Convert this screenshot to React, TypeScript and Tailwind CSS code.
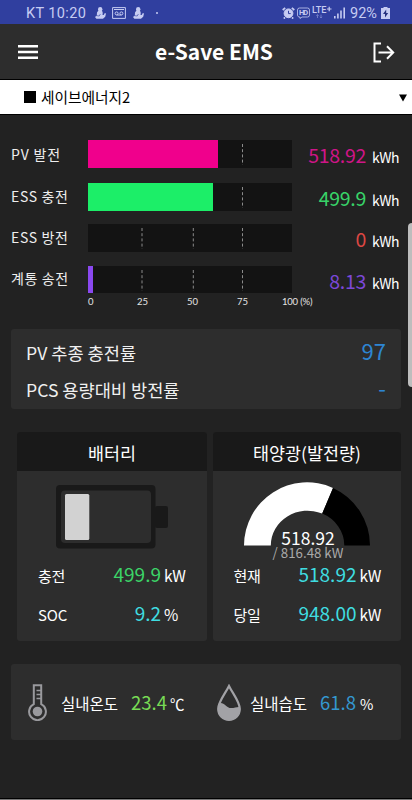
import type { ReactNode } from "react";

const meters = [
  { label: "PV 발전", value: "518.92", width: 129.5, bar: "bg-[#f0008c]", text: "text-[#cf1587]", pad: "mb-[15px]", barH: "h-[28px]", labelCls: "mb-px tracking-[0.8px]" },
  { label: "ESS 충전", value: "499.9", width: 125, bar: "bg-[#1cee68]", text: "text-[#38d368]", pad: "mb-[13px]", barH: "h-[28px]", labelCls: "mb-[3px] tracking-[0.65px]" },
  { label: "ESS 방전", value: "0", width: 0, bar: "bg-[#e04848]", text: "text-[#dc4743]", pad: "mb-[14px]", barH: "h-[28px]", labelCls: "mb-[3px] tracking-[0.65px]" },
  { label: "계통 송전", value: "8.13", width: 5, bar: "bg-[#8a48f0]", text: "text-[#7c48d8]", pad: "", barH: "h-[27px]", labelCls: "mb-[3px] tracking-[0.6px]" },
];

function PersonIcon() {
  return (
    <svg width="11" height="12" viewBox="0 0 11 12" fill="#c6ccf2">
      <circle cx="5.2" cy="2.3" r="2.2" />
      <path d="M3.4 3.5h3.6L7.8 6l-.4 1.8 1.4.2 1-2 1.2.6-.8 3.2L8 11.800H1.400L0 10l1.800-1.600L2 5.600z" />
      <path d="M1.200 8.600l3 .4L5.400 7" stroke="#303f9f" strokeWidth=".6" fill="none" />
    </svg>
  );
}

function StatusBar() {
  return (
    <div className="flex h-6 items-center bg-[#303f9f] pl-[26px] font-[Roboto,sans-serif] text-[14px] text-[#c6ccf2]">
      <span className="w-[61px] pt-[3px] text-[14.5px] leading-5 tracking-[0.4px] whitespace-nowrap">KT 10:20</span>
      <div className="flex items-center pt-px pl-[8px]">
        <PersonIcon />
        <svg className="ml-[6px]" width="14" height="12" viewBox="0 0 14 12" fill="none" stroke="#c6ccf2">
          <path d="M.6.6h12.8v10.8H.6zM2 2.5h10" />
          <circle cx="4.6" cy="6.4" r="1.5" />
          <circle cx="9.4" cy="6.4" r="1.5" />
          <path d="M4.6 8h4.8" />
        </svg>
        <span className="ml-[7px]"><PersonIcon /></span>
        <span className="ml-[12px] size-[2px] rounded-full bg-[#c6ccf2]" />
      </div>
      <div className="ml-auto flex items-center pt-[2px] pr-[22px]">
        <svg width="13" height="12" viewBox="0 0 13 12" fill="none" stroke="#c6ccf2">
          <circle cx="6.5" cy="6.3" r="4.4" fill="#c6ccf2" />
          <path d="M.7 3 3.2.8M12.3 3 9.8.8M3 10.3 1.8 11.6M10 10.3l1.2 1.3" strokeWidth="1.7" />
          <path d="M6.5 3.8v2.8h2.2" stroke="#303f9f" />
        </svg>
        <svg className="ml-[2px]" width="13" height="12" viewBox="0 0 13 12">
          <path d="M2.5 1h8a2 2 0 0 1 2 2v5a2 2 0 0 1-2 2H5l-2 1.5V10a2 2 0 0 1-2.5-2V3a2 2 0 0 1 2-2z" fill="none" stroke="#c6ccf2" strokeWidth=".8" />
          <text x="2" y="8.3" fontSize="7.5" fontWeight="700" fill="#c6ccf2" fontFamily="Roboto, sans-serif" textLength="9">HD</text>
        </svg>
        <svg className="ml-[2px]" width="20" height="14" viewBox="0 0 20 14">
          <text x="0" y="7.3" fontSize="9" fontWeight="500" fill="#c6ccf2" fontFamily="Roboto, sans-serif" textLength="14.5" lengthAdjust="spacingAndGlyphs">LTE</text>
          <path d="M15 3h4.500M17.200.8v4.500" stroke="#c6ccf2" strokeWidth="1.200" />
          <path d="M5.500 12V8.600M4.400 9.800l1.100-1.200 1.100 1.200M9 8.600V12M7.900 10.800 9 12l1.100-1.200" stroke="#7580c8" strokeWidth=".9" fill="none" />
        </svg>
        <svg className="ml-[2px]" width="12" height="12" viewBox="0 0 12 12" fill="#c6ccf2">
          <path d="M0 9h1.6v2.5H0zM3.1 6.5h1.6v5H3.1zM6.2 3.5h1.6v8H6.2z" />
          <path d="M9.4.5H11v11H9.4z" />
        </svg>
        <span className="ml-[4px] w-[29px] pt-px text-[14.5px] leading-5 whitespace-nowrap">92%</span>
        <svg className="ml-[2px]" width="9" height="12" viewBox="0 0 9 12" fill="#c6ccf2">
          <path d="M2.5 0h4v1H9v11H0V1h2.5z" />
          <path d="M5.2 2.4 2 7h2v3.4L7.2 6h-2z" fill="#26317e" />
        </svg>
      </div>
    </div>
  );
}

function Header() {
  return (
    <header className="flex h-[55px] items-center bg-[#2d2d2d] pr-[17px] pl-[18px]">
      <svg width="20" height="14" viewBox="0 0 20 14" fill="#fff">
        <path d="M0 0h20v2.4H0zM0 5.8h20v2.4H0zM0 11.6h20V14H0z" />
      </svg>
      <h1 className="mb-px ml-[117px] w-[120px] text-[21px] leading-8 font-bold whitespace-nowrap text-white">e-Save EMS</h1>
      <svg className="mt-[2px] ml-auto" width="22" height="21" viewBox="0 0 22 21" fill="none" stroke="#fff" strokeWidth="2">
        <path d="M8 1.5H1.5v18H8M5.5 10.5H20M14 4.3l6.2 6.2-6.2 6.2" />
      </svg>
    </header>
  );
}

function Meters() {
  return (
    <section className="pt-[25px] pl-[11px]">
      {meters.map((m) => (
        <div key={m.label} className={`flex items-center ${m.pad} ${m.barH}`}>
          <span className={`w-[77px] text-[14px] leading-5 whitespace-nowrap text-[#eee] ${m.labelCls}`}>{m.label}</span>
          <div className="relative h-full w-[204px] bg-[#131313]">
            <svg className="absolute inset-0" width="204" height="28" stroke="#8b8b8b" strokeDasharray="3 2.2">
              <path d="M54 4v21M105.3 4v21M154.5 4v21" />
            </svg>
            <div className={`absolute inset-y-0 left-0 ${m.bar}`} style={{ width: m.width }} />
          </div>
          <div className="flex items-baseline pt-[4px] leading-7">
            <span className={`w-[74px] text-right text-[19.5px] tracking-[-0.3px] ${m.text}`}>{m.value}</span>
            <span className="ml-[6px] text-[14px] tracking-[-0.5px] text-white">kWh</span>
          </div>
        </div>
      ))}
      <div className="flex h-[15px] font-[Lato,sans-serif] text-[9.5px] leading-[17px] text-[#e4e4e4]">
        <span className="ml-[77px] w-[49px]">0</span>
        <span className="w-[50px]">25</span>
        <span className="w-[50px]">50</span>
        <span className="w-[45px]">75</span>
        <span className="tracking-[-0.2px] whitespace-nowrap">100 (%)</span>
      </div>
    </section>
  );
}

function Reading({ label, value, unit, color }: { label: string; value: string; unit: string; color: string }) {
  return (
    <div className="flex h-[38.5px] items-baseline leading-[38px] text-white">
      <span className="w-[50px] text-[15px] tracking-[-0.2px]">{label}</span>
      <span className={`w-[73px] text-right text-[19px] ${color}`}>{value}</span>
      <span className="ml-[3px] text-[15.5px] tracking-[-0.3px]">{unit}</span>
    </div>
  );
}

function Card({ title, className, children }: { title: string; className: string; children: ReactNode }) {
  return (
    <div className={`h-[209px] overflow-hidden rounded-[3px] bg-[#2d2d2d] ${className}`}>
      <h2 className="h-[39px] bg-[#191919] text-center text-[17.4px] leading-[41px] text-white">{title}</h2>
      {children}
    </div>
  );
}

function Battery() {
  return (
    <svg className="ml-[39px]" width="113" height="84" viewBox="56 471 113 84">
      <rect x="56" y="485" width="99.5" height="63.5" rx="4" fill="#191919" />
      <rect x="155" y="506" width="13" height="22" rx="2" fill="#191919" />
      <rect x="61" y="490.5" width="90" height="52.5" rx="4" fill="#2d2d2d" />
      <rect x="65" y="494" width="24.3" height="46" rx="1.5" fill="#d2d2d2" />
    </svg>
  );
}

function Gauge() {
  return (
    <div className="relative h-[84px]">
      <svg className="absolute inset-0" width="188" height="84" viewBox="213 471 188 84">
        <path d="M244 545.5A63 63.5 0 0 1 333 488L322.2 513.6A36.7 34.7 0 0 0 270.8 545.5z" fill="#fff" />
        <path d="M333 488A63 63.5 0 0 1 370 545.5H344.3A36.7 34.7 0 0 0 322.2 513.6z" fill="#000" />
      </svg>
      <div className="relative pt-[58px] pl-[2px] text-center whitespace-nowrap">
        <p className="text-[17.5px] leading-[18px] text-white">518.92</p>
        <p className="text-[13.3px] leading-[12px] text-[#aaa]">/ 816.48 kW</p>
      </div>
    </div>
  );
}

function Climate() {
  return (
    <section className="mr-[11px] ml-[11px] flex h-[76px] items-center rounded-[3px] bg-[#2d2d2d] pl-[17px] text-white">
      <svg width="19" height="37" viewBox="0 0 19 37" fill="none" stroke="#99999d" strokeWidth="2">
        <path d="M5.8 20.2V1.2h7.4v19a8.4 8.4 0 1 1-7.4 0z" />
        <circle cx="9.5" cy="27.5" r="4.8" fill="#99999d" stroke="none" />
        <path d="M8.5 6.5H13M8.5 10.5H13M8.5 14.5H13" strokeWidth="1.6" />
      </svg>
      <div className="flex items-baseline pt-[2px] leading-8 whitespace-nowrap">
        <span className="ml-[14px] w-[70px] text-[15.5px]">실내온도</span>
        <span className="w-[39px] text-[18.5px] text-[#78dc55]">23.4</span>
        <span className="w-[47px] text-[14.5px]">℃</span>
      </div>
      <svg width="24" height="37" viewBox="0 0 24 37">
        <path d="M12 2C8 10 1.2 18 1.2 25a10.8 10.8 0 0 0 21.6 0C22.8 18 16 10 12 2z" fill="none" stroke="#a2a2a6" strokeWidth="2.2" />
        <path d="M1 20c5-4 8 4 13 4 4 0 6-1.5 9-1 1 7-3.5 13-11 13S0 30 1 20z" fill="#a2a2a6" />
      </svg>
      <div className="flex items-baseline pt-[2px] leading-8 whitespace-nowrap">
        <span className="ml-[9px] w-[70px] text-[15.5px]">실내습도</span>
        <span className="w-[40px] text-[18.5px] text-[#3498d0]">61.8</span>
        <span className="text-[14.5px]">%</span>
      </div>
    </section>
  );
}

export default function App() {
  return (
    <div className="relative flex h-[800px] w-[412px] flex-col overflow-hidden bg-[#222] font-['Noto_Sans_CJK_KR',sans-serif]">
      <StatusBar />
      <Header />
      <div className="flex h-[36px] items-center border-y border-black bg-white pr-[5px] pl-[24px] text-black">
        <span className="size-[12px] bg-black" />
        <span className="ml-[5px] text-[14.7px] leading-5">세이브에너지2</span>
        <svg className="mt-[2px] ml-auto" width="8" height="8" viewBox="0 0 8 8">
          <path d="M0 .5h8l-4 7z" />
        </svg>
      </div>
      <Meters />
      <section className="mt-[21px] mr-[11px] ml-[11px] h-[80px] rounded-[3px] bg-[#2d2d2d] px-[15px] pt-[3px] text-[#f0f0f0]">
        <div className="flex h-[37px] items-baseline justify-between leading-[37px]">
          <span className="text-[17.6px]">PV 추종 충전률</span>
          <span className="text-[22px] text-[#2d85d2]">97</span>
        </div>
        <div className="flex h-[37px] items-baseline justify-between leading-[37px]">
          <span className="text-[17.6px]">PCS 용량대비 방전률</span>
          <span className="text-[22px] text-[#2d85d2]">-</span>
        </div>
      </section>
      <div className="mt-[23px] flex gap-[6px] pl-[17px]">
        <Card title="배터리" className="w-[190px]">
          <Battery />
          <div className="pl-[21px]">
            <Reading label="충전" value="499.9" unit="kW" color="text-[#3cd468]" />
            <Reading label="SOC" value="9.2" unit="%" color="text-[#3fdde0]" />
          </div>
        </Card>
        <Card title="태양광(발전량)" className="w-[188px]">
          <Gauge />
          <div className="pl-[20.5px]">
            <Reading label="현재" value="518.92" unit="kW" color="text-[#3fdde0]" />
            <Reading label="당일" value="948.00" unit="kW" color="text-[#3fdde0]" />
          </div>
        </Card>
      </div>
      <div className="mt-[23px]">
        <Climate />
      </div>
      <div className="mt-auto h-[2px] border-t border-black bg-[#777]" />
      {/* edge panel handle */}
      <div className="absolute top-[223px] right-0 h-[164px] w-[4px] rounded-l-[4px] bg-[#bdbdbd]" />
    </div>
  );
}
